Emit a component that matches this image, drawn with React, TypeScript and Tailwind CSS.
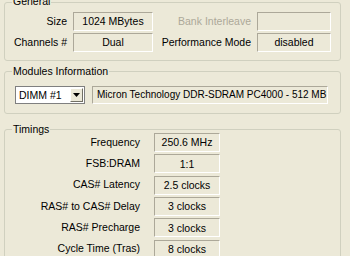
import React from "react";

const font = { fontFamily: '"Liberation Sans", Arial, sans-serif' };

function Field({ children, className = "" }: { children?: React.ReactNode; className?: string }) {
  return (
    <div
      className={
        "flex items-center justify-center whitespace-nowrap border border-t-[#aca899] border-l-[#aca899] border-b-white border-r-white bg-[#ECE9D8] text-[10.5px] leading-none text-black " +
        className
      }
    >
      {children}
    </div>
  );
}

function Group({
  title,
  className = "",
  children,
  labelTop = "-top-[7px]",
}: {
  title: string;
  className?: string;
  children?: React.ReactNode;
  labelTop?: string;
}) {
  return (
    <div className={"relative ml-[4px] w-[337px] rounded-[3px] border border-[#D0D0BF] " + className}>
      <div
        className={
          "absolute left-[7px] bg-[#ECE9D8] px-[1px] text-[10.5px] leading-[13px] text-black " + labelTop
        }
      >
        {title}
      </div>
      {children}
    </div>
  );
}

const timings: [string, string][] = [
  ["Frequency", "250.6 MHz"],
  ["FSB:DRAM", "1:1"],
  ["CAS# Latency", "2.5 clocks"],
  ["RAS# to CAS# Delay", "3 clocks"],
  ["RAS# Precharge", "3 clocks"],
  ["Cycle Time (Tras)", "8 clocks"],
];

export default function App() {
  return (
    <div className="h-[256px] w-[350px] overflow-hidden bg-[#ECE9D8] pt-[2px]" style={font}>
      <Group title="General" className="h-[59px]" labelTop="-top-[8px]">
        <div className="flex flex-col gap-[2px] pt-[9px]">
          <div className="flex h-[19px] items-center">
            <div className="w-[62px] whitespace-nowrap text-right text-[10.5px]">Size</div>
            <Field className="ml-[6px] h-[19px] w-[80px]">1024 MBytes</Field>
            <div className="w-[98px] whitespace-nowrap text-right text-[10.5px] text-[#ACA899]">Bank Interleave</div>
            <Field className="ml-[6px] h-[19px] w-[74px]" />
          </div>
          <div className="flex h-[19px] items-center">
            <div className="w-[62px] whitespace-nowrap text-right text-[10.5px]">Channels #</div>
            <Field className="ml-[6px] h-[19px] w-[80px]">Dual</Field>
            <div className="w-[98px] whitespace-nowrap text-right text-[10.5px]">Performance Mode</div>
            <Field className="ml-[6px] h-[19px] w-[74px]">disabled</Field>
          </div>
        </div>
      </Group>

      <Group title="Modules Information" className="mt-[10px] h-[43px]">
        <div className="flex items-center pl-[10px] pt-[14px]">
          <div className="flex h-[18px] w-[70px] items-center border border-[#7f7f7f] bg-white">
            <div className="flex-1 whitespace-nowrap pl-[3px] text-[10.5px] leading-none">DIMM #1</div>
            <div className="mr-[1px] flex h-[14px] w-[13px] items-center justify-center border border-t-white border-l-white border-b-[#716f64] border-r-[#716f64] bg-[#ECE9D8]">
              <svg width="7" height="4" viewBox="0 0 7 4">
                <path d="M0 0h7L3.5 4z" fill="#000" />
              </svg>
            </div>
          </div>
          <Field className="ml-[7px] h-[18px] w-[236px] !justify-start pl-[4px] !text-[10px]">
            Micron Technology DDR-SDRAM PC4000 - 512 MB
          </Field>
        </div>
      </Group>

      <Group title="Timings" className="mt-[15px] h-[140px]">
        <div className="flex flex-col gap-[2.33px] pt-[3px]">
          {timings.map(([label, value]) => (
            <div key={label} className="flex h-[19px] items-center">
              <div className="w-[135px] whitespace-nowrap text-right text-[10.5px]">{label}</div>
              <Field className="ml-[14px] h-[19px] w-[66px]">{value}</Field>
            </div>
          ))}
        </div>
      </Group>
    </div>
  );
}
